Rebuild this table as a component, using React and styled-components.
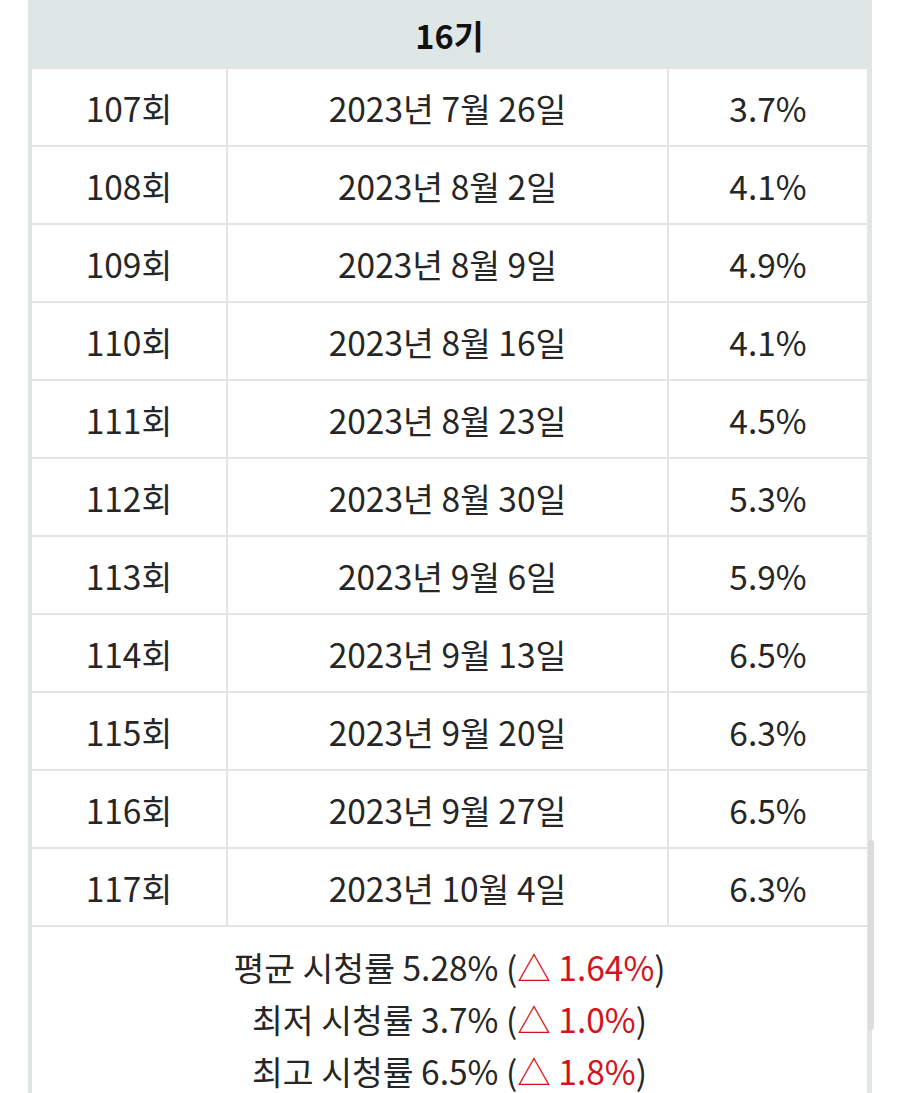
import React from 'react'
import styled, { createGlobalStyle } from 'styled-components'

const GlobalStyle = createGlobalStyle`
    html, body {
        margin: 0;
        padding: 0;
        background: #ffffff;
    }
    body {
        font-family: "Noto Sans CJK KR", "Noto Sans", sans-serif;
        color: #222222;
    }
`

const episodes = [
    { no: '107회', date: '2023년 7월 26일', rate: '3.7%' },
    { no: '108회', date: '2023년 8월 2일', rate: '4.1%' },
    { no: '109회', date: '2023년 8월 9일', rate: '4.9%' },
    { no: '110회', date: '2023년 8월 16일', rate: '4.1%' },
    { no: '111회', date: '2023년 8월 23일', rate: '4.5%' },
    { no: '112회', date: '2023년 8월 30일', rate: '5.3%' },
    { no: '113회', date: '2023년 9월 6일', rate: '5.9%' },
    { no: '114회', date: '2023년 9월 13일', rate: '6.5%' },
    { no: '115회', date: '2023년 9월 20일', rate: '6.3%' },
    { no: '116회', date: '2023년 9월 27일', rate: '6.5%' },
    { no: '117회', date: '2023년 10월 4일', rate: '6.3%' },
]

const summary = [
    { label: '평균 시청률 5.28%', diff: '1.64%' },
    { label: '최저 시청률 3.7%', diff: '1.0%' },
    { label: '최고 시청률 6.5%', diff: '1.8%' },
]

const App = () => {
    return (
        <>
            <GlobalStyle />
            <Page>
                <Table>
                    <Header>16기</Header>
                    <Grid>
                        {episodes.map((ep) => (
                            <React.Fragment key={ep.no}>
                                <Cell>{ep.no}</Cell>
                                <Cell>{ep.date}</Cell>
                                <Cell>{ep.rate}</Cell>
                            </React.Fragment>
                        ))}
                        <Summary>
                            {summary.map((s) => (
                                <SummaryLine key={s.label}>
                                    {s.label} (<Red>△ {s.diff}</Red>)
                                </SummaryLine>
                            ))}
                        </Summary>
                    </Grid>
                </Table>
                <ScrollThumb />
            </Page>
        </>
    )
}

const Page = styled.div`
    position: relative;
    width: 900px;
    height: 1093px;
    overflow: hidden;
`

const Table = styled.div`
    margin-left: 28px;
    width: 844px;
    box-sizing: border-box;
    padding: 0 5px 0 4px;
    background: #dfe7e6;
`

const Header = styled.div`
    height: 68px;
    display: flex;
    align-items: center;
    justify-content: center;
    font-size: 32.5px;
    font-weight: 700;
    color: #111111;
`

const Grid = styled.div`
    display: grid;
    grid-template-columns: 194px 439px 1fr;
    gap: 2px;
    padding-top: 1px;
    background: #e4e4e4;
`

const Cell = styled.div`
    height: 76px;
    background: #ffffff;
    display: flex;
    align-items: center;
    justify-content: center;
    font-size: 33.5px;
    color: #262626;
`

const Summary = styled.div`
    grid-column: 1 / -1;
    background: #ffffff;
    padding: 14px 0 40px;
    display: flex;
    flex-direction: column;
    align-items: center;
`

const SummaryLine = styled.div`
    font-size: 33.5px;
    line-height: 52px;
    color: #262626;
`

const Red = styled.span`
    color: #d3141c;
`

const ScrollThumb = styled.div`
    position: absolute;
    left: 868px;
    top: 840px;
    width: 6px;
    height: 190px;
    border-radius: 3px;
    background: #dcdcdc;
`

export default App
